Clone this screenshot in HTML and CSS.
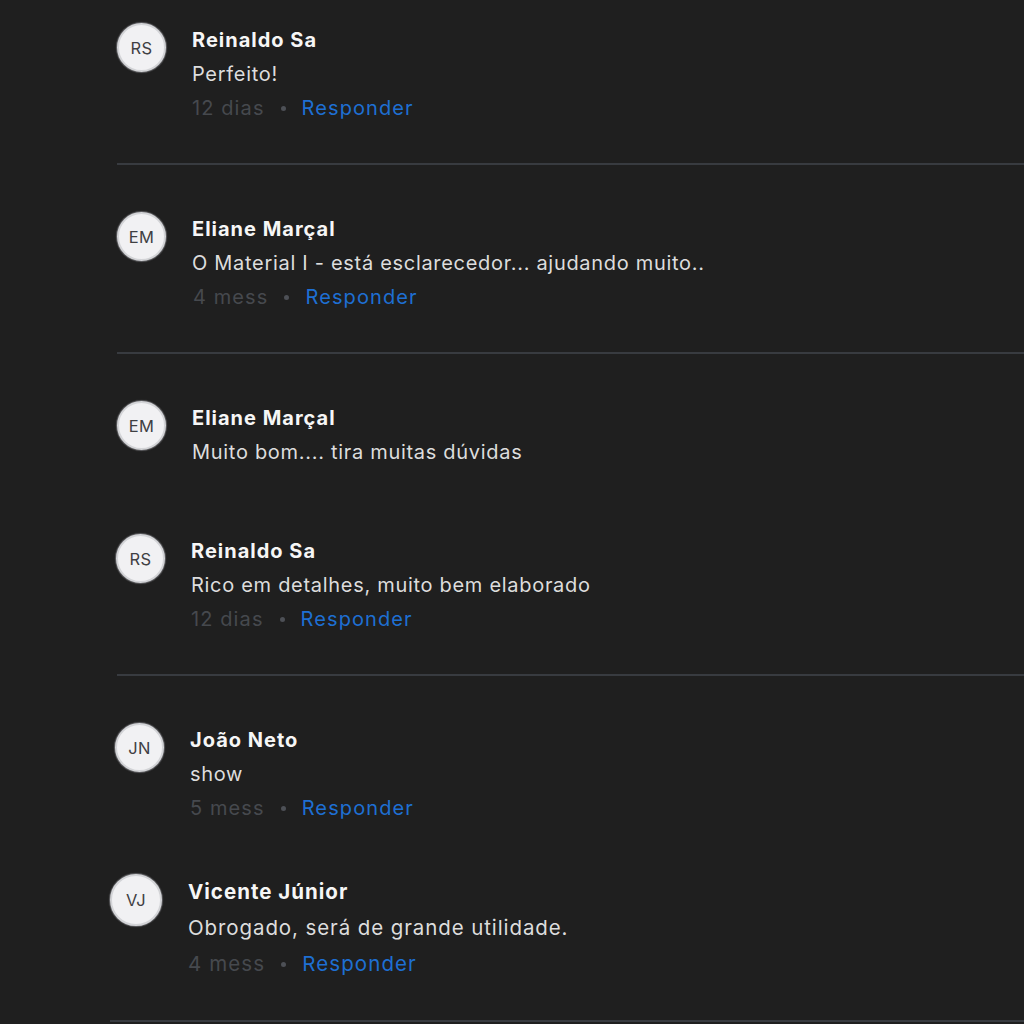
FILE: index.html
```html
<!DOCTYPE html>
<html lang="pt-BR">
<head>
<meta charset="utf-8">
<title>Comentários</title>
<link rel="stylesheet" href="styles.css">
</head>
<body>
<main class="comments">
  <section class="group group--first">
    <article class="comment">
      <div class="avatar">RS</div>
      <div class="content">
        <div class="name">Reinaldo Sa</div>
        <p class="text">Perfeito!</p>
        <div class="meta"><span class="time">12 dias</span><span class="dot"></span><a class="reply">Responder</a></div>
      </div>
    </article>
  </section>
  <section class="group">
    <article class="comment">
      <div class="avatar">EM</div>
      <div class="content">
        <div class="name">Eliane Marçal</div>
        <p class="text">O Material I - está esclarecedor... ajudando muito..</p>
        <div class="meta meta--shift"><span class="time">4 mess</span><span class="dot"></span><a class="reply">Responder</a></div>
      </div>
    </article>
  </section>
  <section class="group">
    <article class="comment">
      <div class="avatar">EM</div>
      <div class="content">
        <div class="name">Eliane Marçal</div>
        <p class="text">Muito bom.... tira muitas dúvidas</p>
      </div>
    </article>
    <article class="comment comment--next">
      <div class="avatar">RS</div>
      <div class="content">
        <div class="name">Reinaldo Sa</div>
        <p class="text">Rico em detalhes, muito bem elaborado</p>
        <div class="meta"><span class="time">12 dias</span><span class="dot"></span><a class="reply">Responder</a></div>
      </div>
    </article>
  </section>
  <section class="group group--last">
    <article class="comment comment--mid">
      <div class="avatar">JN</div>
      <div class="content">
        <div class="name">João Neto</div>
        <p class="text">show</p>
        <div class="meta"><span class="time">5 mess</span><span class="dot"></span><a class="reply">Responder</a></div>
      </div>
    </article>
    <article class="comment comment--large">
      <div class="avatar">VJ</div>
      <div class="content">
        <div class="name">Vicente Júnior</div>
        <p class="text">Obrogado, será de grande utilidade.</p>
        <div class="meta"><span class="time">4 mess</span><span class="dot"></span><a class="reply">Responder</a></div>
      </div>
    </article>
  </section>
</main>
</body>
</html>
```

FILE: styles.css
```css
html, body {
  margin: 0;
  padding: 0;
  background: #1f1f1f;
}

body {
  font-family: Inter, "Noto Sans", "Liberation Sans", sans-serif;
  color: #dedede;
  overflow: hidden;
}

.comments {
  padding-left: 117px;
}

.group {
  padding: 47px 0 38px;
  border-bottom: 2px solid #383b40;
}

.group--first {
  padding-top: 23px;
}

.group--last {
  margin-left: -7px;
  padding-left: 7px;
}

.comment {
  display: flex;
  gap: 26px;
  align-items: flex-start;
}

.comment--next {
  margin-top: 65px;
  margin-left: -1px;
}

.comment--mid {
  margin-left: -2px;
}

.avatar {
  flex: none;
  width: 45px;
  height: 45px;
  border-radius: 50%;
  background: #f1f1f3;
  border: 2px solid #d3d4d7;
  box-shadow: 0 0 1px 1px rgba(160, 160, 165, 0.5);
  color: #3f4043;
  font-size: 16.5px;
  display: flex;
  align-items: center;
  justify-content: center;
  letter-spacing: 0.3px;
}

.content {
  font-size: 20px;
  line-height: 34px;
}

.name {
  font-weight: 700;
  color: #f6f6f6;
  letter-spacing: 1px;
}

.text {
  margin: 0;
  color: #dddddd;
  letter-spacing: 0.7px;
}

.meta {
  display: flex;
  align-items: center;
  letter-spacing: 1.1px;
}

.meta--shift {
  padding-left: 1px;
}

.time {
  color: #46494e;
}

.dot {
  width: 5px;
  height: 5px;
  border-radius: 50%;
  background: #4d5056;
  margin: 0 16px;
}

.reply {
  color: #1e6fd3;
  cursor: pointer;
}

.comment--large {
  margin-top: 49px;
  margin-left: -7px;
}

.comment--large .avatar {
  width: 48px;
  height: 48px;
}

.comment--large .content {
  font-size: 20.5px;
  line-height: 36px;
}

.comment--large .text {
  letter-spacing: 0.9px;
}
```
